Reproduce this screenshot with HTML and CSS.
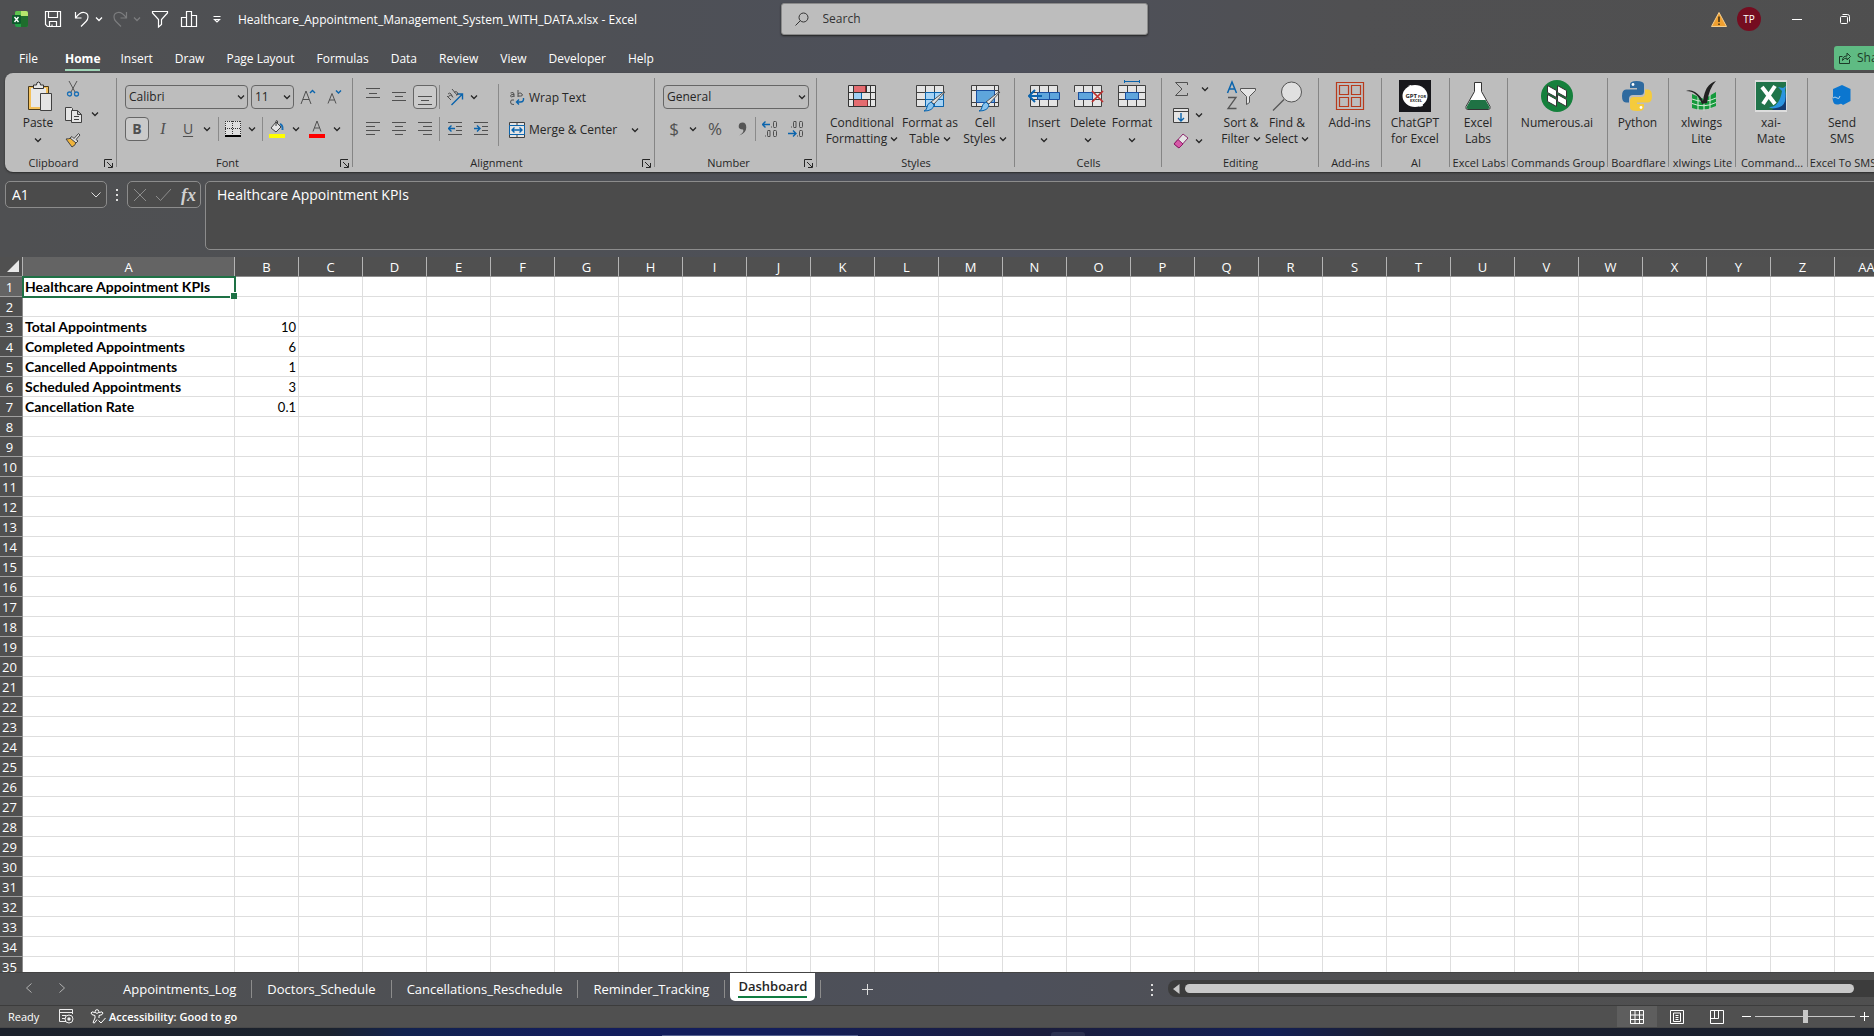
FILE: index.html
```html
<!DOCTYPE html>
<html lang="en">
<head>
<meta charset="utf-8">
<title>Healthcare_Appointment_Management_System_WITH_DATA.xlsx - Excel</title>
<link rel="stylesheet" href="styles.css">
</head>
<body>
<svg class="defs" aria-hidden="true">
  <symbol id="chev" viewBox="0 0 8 8"><path d="M1 2.5 4 5.5 7 2.5" fill="none" stroke="currentColor" stroke-width="1.3"/></symbol>
  <symbol id="launch" viewBox="0 0 9 9"><path d="M.5 8V.5H8M3 3l5 5M8.500 4v4.500H4" fill="none" stroke="#262626"/></symbol>
  <symbol id="grid" viewBox="0 0 28 22"><path d="M.5.5h27v21H.5z" fill="#e4e4e4"/><path d="M.5.5h27v21H.5zM.5 7.500h27M.5 14.500h27M9.500.5v21M18.500.5v21" fill="none" stroke="#404040"/></symbol>
</svg>
<div class="app">
  <header class="titlebar">
    <div class="quick">
      <svg class="logo" width="16" height="16" viewBox="0 0 16 16"><rect x="3" width="13" height="16" rx="2" fill="#21a045"/><path d="M9 0h5q2 0 2 2v3H9z" fill="#b5e66d"/><path d="M3 2q0-2 2-2h4v5H3z" fill="#5fc34e"/><path d="M9 5h7v9q0 2-2 2H9z" fill="#1e6d2d"/><rect y="4" width="9" height="9" rx="1" fill="#0d5c2c"/><path d="m2.500 6 4 5m0-5-4 5" stroke="#fff" stroke-width="1.400"/></svg>
      <button class="qb save" aria-label="Save"><svg width="18" height="18" viewBox="0 0 18 18"><path d="M1.500 1.500h15v15h-13l-2-2zM4.500 1.500v6h9v-6M5.500 16.500v-5h7v5M8 16.500v-2" /></svg></button>
      <button class="qb undo" aria-label="Undo"><svg width="18" height="18" viewBox="0 0 18 18"><path d="M2.500 2v6h6M2.500 8Q7 2 11 2.500q4 .5 4 4.500 0 2.500-2 4.500l-5 5"/></svg></button>
      <button class="qb small" aria-label="Undo list"><svg width="8" height="8"><use href="#chev"/></svg></button>
      <button class="qb redo" aria-label="Redo" disabled><svg width="18" height="18" viewBox="0 0 18 18"><path d="M15.500 2v6h-6M15.500 8Q11 2 7 2.500 3 3 3 7q0 2.500 2 4.500l5 5"/></svg></button>
      <button class="qb small" aria-label="Redo list" disabled><svg width="8" height="8"><use href="#chev"/></svg></button>
      <button class="qb filter" aria-label="Filter"><svg width="18" height="18" viewBox="0 0 18 18"><path d="M1.500 1.500h15v1.500l-6 6.500v5l-3 2.500V9.500L1.500 3z"/></svg></button>
      <button class="qb chart" aria-label="Chart"><svg width="18" height="18" viewBox="0 0 18 18"><path d="M1.500 7.500h5v9h-5zM6.500 1.500h5v15h-5zM11.500 5.500h5v11h-5z"/></svg></button>
      <button class="qb more" aria-label="Customize toolbar"><svg width="8" height="9" viewBox="0 0 8 9"><path d="M.5 1.500h7M1.500 4.500h5L4 7z"/></svg></button>
    </div>
    <h1 class="doc">Healthcare_Appointment_Management_System_WITH_DATA.xlsx - Excel</h1>
    <label class="search"><svg width="14" height="14" viewBox="0 0 14 14"><circle cx="8.500" cy="5.500" r="4.500" fill="none" stroke="#333"/><path d="m5.500 8.500-5 5" stroke="#333"/></svg><input type="text" placeholder="Search" aria-label="Search"></label>
    <div class="winctl">
      <svg class="warn" width="16" height="15" viewBox="0 0 16 15"><path d="M8 .5 15.500 14.500H.5z" fill="#f0a030" stroke="#f6cf8e"/><path d="M8 4.500v5.500M8 11.500v1.500" stroke="#3a2a10" stroke-width="1.500"/></svg>
      <span class="avatar">TP</span>
      <button class="wb" aria-label="Minimize"><svg width="10" height="10"><path d="M0 5.500h10"/></svg></button>
      <button class="wb" aria-label="Restore"><svg width="10" height="10" viewBox="0 0 10 10"><rect x=".5" y="2.500" width="7" height="7" rx="1"/><path d="M2.500.5h5q2 0 2 2v5"/></svg></button>
    </div>
  </header>
  <nav class="tabs">
    <a href="#file">File</a><a href="#home" class="on">Home</a><a href="#insert">Insert</a><a href="#draw">Draw</a><a href="#layout">Page Layout</a><a href="#formulas">Formulas</a><a href="#data">Data</a><a href="#review">Review</a><a href="#view">View</a><a href="#developer">Developer</a><a href="#help">Help</a>
    <button class="share"><svg width="12" height="12" viewBox="0 0 12 12"><path d="M3.500 4.500h-3v7h10v-4M3.500 8.500q0-4.500 4.500-4.500V1l3.500 3.500L8 8V6Q5 6 3.500 8.500z" fill="none" stroke="#1c3a28"/></svg>Share</button>
  </nav>

  <div class="ribbon">
    <section class="group g-clip">
      <div class="body">
        <button class="big w-paste"><svg width="32" height="32" viewBox="0 0 32 32"><path d="M6.500 6.500h20v23h-20z" fill="#f3c05a" stroke="#4a3a1a"/><path d="M9 8h15v19H9z" fill="#e8e8e8"/><path d="M11.500 8.500V5h3q0-3 2-3t2 3h3v3.500z" fill="#e8e8e8" stroke="#333"/><path d="M18.500 13.500h11v17h-11z" fill="#e4e4e4" stroke="#404040"/></svg><span>Paste</span><svg class="cv" width="8" height="8"><use href="#chev"/></svg></button>
        <div class="stack clip">
          <button class="ib" aria-label="Cut"><svg width="14" height="18" viewBox="0 0 14 18"><path d="m3 1 6 11M11 1 5 12" stroke="#555" fill="none"/><circle cx="3.500" cy="14" r="2" fill="none" stroke="#1a6fb5" stroke-width="1.300"/><circle cx="10.500" cy="14" r="2" fill="none" stroke="#1a6fb5" stroke-width="1.300"/></svg></button>
          <button class="ib" aria-label="Copy"><svg width="17" height="16" viewBox="0 0 17 16"><path d="M.5.5h6l1 1v12h-7z" fill="#e4e4e4" stroke="#404040"/><path d="M6.500 3.500h6l4 4v8h-10zM12.500 3.500v4h4M9 9.500h5M9 12.500h5" fill="#e4e4e4" stroke="#404040"/></svg></button>
          <button class="ib" aria-label="Format painter"><svg width="16" height="16" viewBox="0 0 16 16"><path d="M1 6 7 14q4-2 4-5L6 5q-2 1-5 1z" fill="#f0b43c" stroke="#444"/><path d="m5 5 6 5 2-2-2-1.500 4-4.500-1.500-1.500L9 5.500 7 3.500z" fill="#ddd" stroke="#444"/></svg></button>
        </div>
        <button class="cb copycv" aria-label="Copy options"><svg width="8" height="8"><use href="#chev"/></svg></button>
      </div>
      <h2>Clipboard</h2><button class="launch" aria-label="Clipboard settings"><svg width="9" height="9"><use href="#launch"/></svg></button>
    </section>

    <section class="group g-font">
      <div class="body rows">
        <div class="row">
          <span class="combo w-font"><select aria-label="Font"><option>Calibri</option></select><svg width="8" height="8"><use href="#chev"/></svg></span>
          <span class="combo w-size"><select aria-label="Font size"><option>11</option></select><svg width="8" height="8"><use href="#chev"/></svg></span>
          <button class="ib w28" aria-label="Increase font size"><svg width="16" height="16" viewBox="0 0 16 16"><path d="M1 15 6 2l5 13M3 10.500h6" class="ln"/><path d="m10 4 2.500-2.500L15 4" class="bl"/></svg></button>
          <button class="ib w24" aria-label="Decrease font size"><svg width="16" height="16" viewBox="0 0 16 16"><path d="m2 14.500 4-10 4 10M3.500 11h5" class="ln"/><path d="m10 1.500 2.500 2.500L15 1.500" class="bl"/></svg></button>
        </div>
        <div class="row">
          <button class="ib w24 boxed letter b">B</button><button class="ib w28 letter i">I</button><button class="ib w22 letter u">U</button><button class="cb w16" aria-label="Underline options"><svg width="8" height="8"><use href="#chev"/></svg></button>
          <i class="sep"></i>
          <button class="ib w24" aria-label="Borders"><svg width="16" height="16" viewBox="0 0 16 16"><path d="M0 0h16v15H0z" fill="#dedede"/><path d="M.5 0v14M15.500 0v14M7.500 0v14M0 .5h16M0 7.500h16" stroke="#333" stroke-dasharray="1 1"/><path d="M0 15h16" stroke="#000" stroke-width="2"/></svg></button><button class="cb w14" aria-label="Border options"><svg width="8" height="8"><use href="#chev"/></svg></button>
          <i class="sep"></i>
          <button class="ib w24" aria-label="Fill color"><svg width="18" height="18" viewBox="0 0 18 18"><path d="M8 2 3 8l5 4 5-5zM8 6V1q0-1 1.500 0v3" fill="#e4e4e4" stroke="#444"/><path d="M12 4q3 1 2.500 6" stroke="#1a6fb5" stroke-width="2" fill="none"/><path d="M1 14h16v4H1z" fill="#ff0"/></svg></button><button class="cb w14" aria-label="Fill options"><svg width="8" height="8"><use href="#chev"/></svg></button>
          <button class="ib w28" aria-label="Font color"><svg width="18" height="18" viewBox="0 0 18 18"><path d="m5 11.500 4-10.500 4 10.500M6.500 8h5" class="ln"/><path d="M1 14h16v4H1z" fill="#f00"/></svg></button><button class="cb" aria-label="Font color options"><svg width="8" height="8"><use href="#chev"/></svg></button>
        </div>
      </div>
      <h2>Font</h2><button class="launch" aria-label="Font settings"><svg width="9" height="9"><use href="#launch"/></svg></button>
    </section>

    <section class="group g-align">
      <div class="body">
        <div class="rows">
          <div class="row">
            <button class="ib w24" aria-label="Top align"><svg width="14" height="20" viewBox="0 0 14 20"><path d="M0 1.500h14M3 6.500h8M0 10.500h14" class="ln"/></svg></button><button class="ib w28" aria-label="Middle align"><svg width="14" height="20" viewBox="0 0 14 20"><path d="M0 5.500h14M3 9.500h8M0 13.500h14" class="ln"/></svg></button><button class="ib w24 boxed" aria-label="Bottom align"><svg width="14" height="20" viewBox="0 0 14 20"><path d="M0 9.500h14M3 13.500h8M0 17.500h14" class="ln"/></svg></button>
            <i class="sep tight"></i>
            <button class="ib w26" aria-label="Orientation"><svg width="18" height="18" viewBox="0 0 18 18"><path d="M5.500 17 16 6.500M11 6h5.500v5.500" class="bl"/><path d="m1 8 4 4M2 6q2-2 3 0l2 3.500M2.500 9.500Q3 6 6 8M6 1l5 6M8 4.500q2-2 3.500 0t-1 3" class="ln"/></svg></button><button class="cb" aria-label="Orientation options"><svg width="8" height="8"><use href="#chev"/></svg></button>
          </div>
          <div class="row">
            <button class="ib w24" aria-label="Align left"><svg width="14" height="14" viewBox="0 0 14 14"><path d="M0 .5h14M0 4.500h9M0 8.500h14M0 12.500h9" class="ln"/></svg></button><button class="ib w28" aria-label="Center"><svg width="14" height="14" viewBox="0 0 14 14"><path d="M0 .5h14M3 4.500h8M0 8.500h14M3 12.500h8" class="ln"/></svg></button><button class="ib w24" aria-label="Align right"><svg width="14" height="14" viewBox="0 0 14 14"><path d="M0 .5h14M5 4.500h9M0 8.500h14M5 12.500h9" class="ln"/></svg></button>
            <i class="sep tight"></i>
            <button class="ib w26" aria-label="Decrease indent"><svg width="14" height="14" viewBox="0 0 14 14"><path d="M0 .5h14M8 4.500h6M8 8.500h6M0 12.500h14" class="ln"/><path d="M.5 6.500H7M3.500 3.500l-3 3 3 3" class="bl"/></svg></button><button class="ib w26" aria-label="Increase indent"><svg width="14" height="14" viewBox="0 0 14 14"><path d="M0 .5h14M8 4.500h6M8 8.500h6M0 12.500h14" class="ln"/><path d="M0 6.500h6M3 3.500l3 3-3 3" class="bl"/></svg></button>
          </div>
        </div>
        <div class="rows wrapcol">
          <button class="tb"><svg width="16" height="16" viewBox="0 0 16 16"><path d="M1.500 3Q5 1.500 5 4v3M5 4.500Q1.500 4 1.500 6T5 6M9 0v7M9 4q2-2.500 4 0t-4 2M5 10q-3.500-1-3.500 2T5 14.500" class="ln"/><path d="M14.500 8q.5 4-3 4H7.500M10 9.500 7.500 12l2.500 2.500" class="bl"/></svg>Wrap Text</button>
          <button class="tb"><svg width="16" height="16" viewBox="0 0 16 16"><path d="M.5.500h15v15H.5zM8 0v4M8 12v4" fill="#e4e4e4" stroke="#404040"/><path d="M.5 3.500h15v9H.5z" fill="#e4e4e4" stroke="#0a64ad"/><path d="M3 8h10M5.500 5.500 3 8l2.500 2.500M10.500 5.500 13 8l-2.500 2.500" class="bl"/></svg>Merge &amp; Center<svg class="mcv" width="8" height="8"><use href="#chev"/></svg></button>
        </div>
      </div>
      <h2>Alignment</h2><button class="launch" aria-label="Alignment settings"><svg width="9" height="9"><use href="#launch"/></svg></button>
    </section>

    <section class="group g-num">
      <div class="body rows">
        <div class="row"><span class="combo w-gen"><select aria-label="Number format"><option>General</option></select><svg width="8" height="8"><use href="#chev"/></svg></span></div>
        <div class="row">
          <button class="ib w22 sym">$</button><button class="cb w16" aria-label="Currency options"><svg width="8" height="8"><use href="#chev"/></svg></button><button class="ib w28 sym">%</button><button class="ib w26" aria-label="Comma style"><svg width="9" height="14" viewBox="0 0 8 13"><path d="M1 12.500Q6 9.500 4.500 7 0 7 .5 3.500 1 .5 4 .5 7.500.5 7.500 5q0 5-6.500 7.500z" fill="#555"/></svg></button>
          <i class="sep flush"></i>
          <button class="ib w28" aria-label="Increase decimal"><svg width="16" height="16" viewBox="0 0 16 16"><path d="M.5 3.500H8M3.500.5l-3 3 3 3" class="bl"/><path d="M12 .5h1.500q1 0 1 1v4q0 1-1 1H12q-.5 0-.5-1v-4q0-1 .5-1zM6 9.500h2v6H6q-.5 0-.5-1v-4q0-1 .5-1zM12 9.500h1.500q1 0 1 1v4q0 1-1 1H12q-.5 0-.5-1v-4q0-1 .5-1zM3 15h1M9 6h1" class="ln"/></svg></button><button class="ib w24" aria-label="Decrease decimal"><svg width="16" height="16" viewBox="0 0 16 16"><path d="M0 12.500h8M5 9.500l3 3-3 3" class="bl"/><path d="M12 9.500h1.500q1 0 1 1v4q0 1-1 1H12q-.5 0-.5-1v-4q0-1 .5-1zM6 .5h2v6H6q-.5 0-.5-1v-4q0-1 .5-1zM12 .5h1.500q1 0 1 1v4q0 1-1 1H12q-.5 0-.5-1v-4q0-1 .5-1zM3 6h1M9 15h1" class="ln"/></svg></button>
        </div>
      </div>
      <h2>Number</h2><button class="launch" aria-label="Number settings"><svg width="9" height="9"><use href="#launch"/></svg></button>
    </section>

    <section class="group g-styles">
      <div class="body">
        <button class="big w76"><svg width="32" height="32" viewBox="0 0 32 32"><path d="M2.500 5.500h27v21h-27z" fill="#e4e4e4"/><path d="M7.500 5.500h12v7h-12zM7.500 19.500h14v7h-14z" fill="#e46c70" stroke="#8c2a2e"/><path d="M7.500 12.500h8v7h-8z" fill="#9fd0f5" stroke="#0a64ad"/><path d="M2.500 5.500h27v21h-27zM2.500 12.500h27M2.500 19.500h27M7.500 5.500v21M20.500 5.500v7M24.500 5.500v21" fill="none" stroke="#333"/></svg><span>Conditional<br>Formatting <svg width="8" height="8"><use href="#chev"/></svg></span></button>
        <button class="big w60"><svg width="32" height="32" viewBox="0 0 32 32"><use href="#grid" x="2" y="5" width="28" height="22"/><path d="M11.500 12.500h18v14h-18z" fill="#a6d3f5" stroke="#0a64ad"/><path d="M11.500 19.500h18M20.500 12.500v14" stroke="#0a64ad"/><path d="M31 12 20 24l-3-2L29 12.500z" fill="#e4e4e4" stroke="#555"/><path d="m17 22 3 3q-1 6-10 6 3-1 3-4t4-5z" fill="#8ac4ee" stroke="#0a64ad"/></svg><span>Format as<br>Table <svg width="8" height="8"><use href="#chev"/></svg></span></button>
        <button class="big w50"><svg width="32" height="32" viewBox="0 0 32 32"><path d="M2.500 5.500h27v21h-27zM2.500 10.500h27M2.500 22.500h27M7.500 5.500v21M25.500 5.500v21" fill="#e4e4e4" stroke="#404040"/><path d="M7.500 10.500h18v12h-18z" fill="#5ea5dc" stroke="#1a4fa0"/><path d="M31 12 20 24l-3-2L29 12.500z" fill="#e4e4e4" stroke="#555"/><path d="m17 22 3 3q-1 6-10 6 3-1 3-4t4-5z" fill="#8ac4ee" stroke="#0a64ad"/></svg><span>Cell<br>Styles <svg width="8" height="8"><use href="#chev"/></svg></span></button>
      </div>
      <h2>Styles</h2>
    </section>

    <section class="group g-cells">
      <div class="body">
        <button class="big w44"><svg width="32" height="32" viewBox="0 0 32 32"><use href="#grid" x="2" y="5" width="28" height="22"/><path d="M9.500 12.500h22v7h-22z" fill="#5ea5dc" stroke="#1a4fa0"/><path d="M21.500 12.500v7" stroke="#1a4fa0"/><path d="M1 16h13M7 10l-6 6 6 6" fill="none" stroke="#0a64ad" stroke-width="2"/></svg><span>Insert</span><svg class="cv" width="8" height="8"><use href="#chev"/></svg></button>
        <button class="big w44"><svg width="32" height="32" viewBox="0 0 32 32"><use href="#grid" x="2" y="5" width="28" height="22"/><path d="M1 12h5v8H1z" fill="#bdbdbd"/><path d="M6.500 12.500h14v7h-14z" fill="#5ea5dc" stroke="#1a4fa0"/><path d="m20 11 11 11M31 11 20 22" stroke="#c03030" stroke-width="1.700"/></svg><span>Delete</span><svg class="cv" width="8" height="8"><use href="#chev"/></svg></button>
        <button class="big w44"><svg width="32" height="32" viewBox="0 0 32 32"><use href="#grid" x="2" y="5" width="28" height="22"/><path d="M9.500 12.500h13v7h-13z" fill="#5ea5dc" stroke="#1a4fa0"/><path d="M8.500 0v3M23.500 0v3M8.500 1.500h15" stroke="#0a64ad"/></svg><span>Format</span><svg class="cv" width="8" height="8"><use href="#chev"/></svg></button>
      </div>
      <h2>Cells</h2>
    </section>

    <section class="group g-edit">
      <div class="body">
        <div class="stack edit">
          <div><button class="ib w24" aria-label="AutoSum"><svg width="13" height="15" viewBox="0 0 13 15"><path d="M12.500 3V.5H.5L7 7 .5 13.500h12V11" class="ln"/></svg></button><button class="cb w24" aria-label="Sum options"><svg width="8" height="8"><use href="#chev"/></svg></button></div>
          <div><button class="ib w24" aria-label="Fill"><svg width="16" height="15" viewBox="0 0 16 15"><path d="M.5.500h15v14H.5zM.5 3.500h15" fill="#e4e4e4" stroke="#404040"/><path d="M8 5v8M5 10l3 3 3-3" class="bl"/></svg></button><button class="cb" aria-label="Fill options"><svg width="8" height="8"><use href="#chev"/></svg></button></div>
          <div><button class="ib w24" aria-label="Clear"><svg width="16" height="16" viewBox="0 0 16 16"><path d="M10 1 15 5 6 15 1 11z" fill="#e4e4e4" stroke="#8c2a6e"/><path d="M5 6.500 10 11 6 15 1 11z" fill="#d65aa8" stroke="#8c1a66"/></svg></button><button class="cb" aria-label="Clear options"><svg width="8" height="8"><use href="#chev"/></svg></button></div>
        </div>
        <button class="big w46"><svg width="32" height="32" viewBox="0 0 32 32"><path d="m2.500 13 4.500-11 4.500 11M4 9h6" fill="none" stroke="#0a64ad" stroke-width="1.500"/><path d="M3 17.500h8l-8 11h8.500" fill="none" stroke="#555" stroke-width="1.300"/><path d="M15.500 8.500h15v2l-6 6v6l-3 2v-8l-6-6z" fill="#e4e4e4" stroke="#555"/></svg><span>Sort &amp;<br>Filter <svg width="8" height="8"><use href="#chev"/></svg></span></button>
        <button class="big w46"><svg width="32" height="32" viewBox="0 0 32 32"><circle cx="20.500" cy="12" r="10" fill="#e0e0e0" stroke="#555"/><path d="M13 19.500 2 30.500" stroke="#555" stroke-width="1.300"/></svg><span>Find &amp;<br>Select <svg width="8" height="8"><use href="#chev"/></svg></span></button>
      </div>
      <h2>Editing</h2>
    </section>

    <section class="group g-addins"><div class="body mid"><button class="big"><svg width="32" height="32" viewBox="0 0 32 32"><path d="M2.500 2.500h27v27h-27zM5.500 5.500h9v9h-9zM17.500 5.500h9v9h-9zM5.500 17.500h9v9h-9zM17.500 17.500h9v9h-9z" fill="none" stroke="#b83a1c" stroke-width="1.200"/></svg><span>Add-ins</span></button></div><h2>Add-ins</h2></section>
    <section class="group g-ai"><div class="body mid"><button class="big"><svg width="32" height="32" viewBox="0 0 32 32"><path d="M0 0h32v32H0z" fill="#17171b"/><ellipse cx="16" cy="16" rx="12.500" ry="11" fill="#fff"/><path d="m9 6 3-1 1 2zM20 27l4-1-1-3z" fill="#fff"/><text x="6.500" y="17.500" class="gpt">GPT</text><text x="19" y="17.500" class="gpt tiny">FOR</text><text x="11" y="21.500" class="gpt tiny">EXCEL</text></svg><span>ChatGPT<br>for Excel</span></button></div><h2>AI</h2></section>
    <section class="group g-labs"><div class="body mid"><button class="big"><svg width="32" height="32" viewBox="0 0 32 32"><path d="M12.500 2.500h7v9l8.500 15q1 3-2 3H6q-3 0-2-3l8.500-15z" fill="#fff" stroke="#333"/><path d="M8.500 20h15l4 7q.5 2-1.500 2H6q-2 0-1.500-2z" fill="#1f7244"/></svg><span>Excel<br>Labs</span></button></div><h2>Excel Labs</h2></section>
    <section class="group g-comm"><div class="body mid"><button class="big"><svg width="32" height="32" viewBox="0 0 32 32"><circle cx="16" cy="16" r="16" fill="#15803c"/><path d="m6.500 5.500 9 5v7l-9-5zM16.500 5.500l9 5v7l-9-5zM6.500 14.500l9 5v7l-9-5zM16.500 14.500l9 5v7l-9-5z" fill="#fff" stroke="#333"/></svg><span>Numerous.ai</span></button></div><h2>Commands Group</h2></section>
    <section class="group g-board"><div class="body mid"><button class="big"><svg width="32" height="32" viewBox="0 0 32 32"><path d="M15.500 1Q9 1 9 4.500V8h7v1.500H5Q1 9.500 1 16t4 6.500h3V19q0-4 4-4h7.500Q23 15 23 11.500v-7Q23 1 15.500 1z" fill="#2f6a9f"/><circle cx="12" cy="4.500" r="1.400" fill="#fff"/><path d="M16.500 31q6.500 0 6.500-3.500V24h-7v-1.500h11q4 0 4-6.500t-4-6.500h-3V13q0 4-4 4h-7.500Q9 17 9 20.500v7Q9 31 16.500 31z" fill="#f5cb3c"/><circle cx="20" cy="27.500" r="1.400" fill="#fff"/></svg><span>Python</span></button></div><h2>Boardflare</h2></section>
    <section class="group g-xlw"><div class="body mid"><button class="big"><svg width="32" height="32" viewBox="0 0 32 32"><path d="m7 14 12 5 12-7v14q-12 6-24 2z" fill="#159a3c"/><path d="M7 19q12 5 24-1M7 23.500q12 5 24-1M13 16v14M19 18v12.500M25 15v14" stroke="#d5e8d8" fill="none"/><path d="M1 11q4-2 9 1 5 3 8 9Q20 4 31 1q-7 7-9 22l-5 1q-5-13-16-13z" fill="#222"/></svg><span>xlwings<br>Lite</span></button></div><h2>xlwings Lite</h2></section>
    <section class="group g-cmd"><div class="body mid"><button class="big"><svg width="32" height="32" viewBox="0 0 32 32"><path d="M0 0h32v32H0z" fill="#ddd"/><path d="M1 2h30v28H1z" fill="#20744a"/><path d="M17 30 31 14v16z" fill="#143a70"/><path d="m7 7 13 17M20 6 8 24" stroke="#fff" stroke-width="4"/><path d="M14 27q10 1 13-16l-4-4 5 1 3-2-1 4q3 17-9 18-5 1-7-1z" fill="#2a94e0"/></svg><span>xai-<br>Mate</span></button></div><h2>Command...</h2></section>
    <section class="group g-sms"><div class="body mid"><button class="big"><svg width="32" height="32" viewBox="0 0 32 32"><path d="m16 5 8.500 4v12L17 25q-2-2-3-1-6 2-7-3-1-3 0-4V9z" fill="#0b76cf"/><path d="M7 18q2-2 4 0t3-2" stroke="#b8d4ea" fill="none"/></svg><span>Send<br>SMS</span></button></div><h2>Excel To SMS</h2></section>
  </div>

  <div class="formula">
    <div class="namebox"><input type="text" value="A1" aria-label="Name box"><svg width="10" height="8" viewBox="0 0 10 8"><path d="m.5 1.500 4.500 4.500 4.500-4.500"/></svg></div>
    <svg class="dots" width="2" height="12"><path d="M0 0h2v2H0zM0 5h2v2H0zM0 10h2v2H0z" fill="#ddd"/></svg>
    <div class="fxbox">
      <button aria-label="Cancel" class="dim"><svg width="12" height="12"><path d="m0 0 12 12M12 0 0 12"/></svg></button>
      <button aria-label="Enter" class="dim"><svg width="15" height="12"><path d="m0 7 4.500 4.500L15 0"/></svg></button>
      <button class="fx">fx</button>
    </div>
    <textarea class="fbar" aria-label="Formula">Healthcare Appointment KPIs</textarea>
  </div>

  <main class="sheet"><table id="cells"></table></main>

  <footer class="sheetbar">
    <button class="nav" aria-label="Previous sheet"><svg width="6" height="10"><path d="M5.500.5.500 5l5 4.500"/></svg></button>
    <button class="nav" aria-label="Next sheet"><svg width="6" height="10"><path d="m.5.5 5 4.500-5 4.500"/></svg></button>
    <div class="sheets"><button>Appointments_Log</button><button>Doctors_Schedule</button><button>Cancellations_Reschedule</button><button>Reminder_Tracking</button><button class="current"><span>Dashboard</span></button><i class="tabsep"></i></div>
    <button class="add" aria-label="New sheet"><svg width="11" height="11"><path d="M5.500 0v11M0 5.500h11"/></svg></button>
    <svg class="dots sdots" width="2" height="12"><path d="M0 0h2v2H0zM0 5h2v2H0zM0 10h2v2H0z" fill="#ddd"/></svg>
    <div class="scroll"><svg width="7" height="10"><path d="M6.500 0v10L0 5z" fill="#c8c8c8"/></svg><span class="thumb"></span></div>
  </footer>
  <div class="status">
    <span class="ready">Ready</span>
    <svg width="15" height="15" viewBox="0 0 15 15"><path d="M7 12.500H.5V.5h13V5M.5 3.500h13M3 6.500h4M3 9.500h3" fill="none" stroke="#eee"/><circle cx="10" cy="10" r="4" fill="none" stroke="#eee"/><circle cx="10" cy="10" r="1.700" fill="#eee"/></svg>
    <button class="acc"><svg width="16" height="15" viewBox="0 0 16 15"><circle cx="7" cy="2.500" r="1.800"/><path d="M5 3.500Q1 2 1 4t4 2.500V9l-2 4.500q1 1 2 0L7 10.500M9 3.500Q13 2 13 4T9 6.500V9M8.500 11.500l2.500 2.500L15.500 9"/></svg>Accessibility: Good to go</button>
    <div class="views">
      <button class="vb on" aria-label="Normal view"><svg width="14" height="14"><path d="M.5.5h13v13H.5zM.5 5h13M.5 9.500h13M5 .5v13M9.500.5v13"/></svg></button>
      <button class="vb" aria-label="Page layout view"><svg width="14" height="14"><path d="M.5.5h13v13H.5zM3.500 3h7v8.500h-7zM5.500 5.500h3M5.500 7.500h3M5.500 9.500h3"/></svg></button>
      <button class="vb" aria-label="Page break view"><svg width="14" height="14"><path d="M.5.5h13v13H.5zM.5 8.500h8V.5M4.500.5v8"/></svg></button>
      <button class="zb" aria-label="Zoom out"><svg width="9" height="9"><path d="M0 4.500h9"/></svg></button>
      <input type="range" min="10" max="190" value="100" aria-label="Zoom">
      <button class="zb" aria-label="Zoom in"><svg width="9" height="9"><path d="M0 4.500h9M4.500 0v9"/></svg></button>
    </div>
  </div>
  <div class="taskbar"><span class="tsearch"></span><span class="tapp"></span></div>
</div>
<script src="sheet.js"></script>
</body>
</html>
```
FILE: styles.css
```css
* { box-sizing: border-box; }
html, body { height: 100%; margin: 0; overflow: hidden; }
body { font: 12px/16px "Open Sans", "Noto Sans", sans-serif; color: #262626; background: #4f5052; }
button, input, select, textarea { font: inherit; color: inherit; margin: 0; padding: 0; border: 0; background: none; border-radius: 0; outline: 0; }
button { display: flex; align-items: center; justify-content: center; }
svg { display: block; flex: none; }
h1, h2 { margin: 0; font: inherit; }
.defs { position: absolute; width: 0; height: 0; }
.ln { fill: none; stroke: #505050; }
.bl { fill: none; stroke: #0a64ad; stroke-width: 1.4; }

/* The window is a little wider than the screen area and is cut at the right. */
.app { display: flex; flex-direction: column; width: calc(100% + 54px); height: 100%; background: linear-gradient(90deg, #4f5052 0, #4e5055 30%, #4d505b 52%, #505052 70%, #4f4f4f 100%); }

.titlebar { display: grid; grid-template-columns: 1fr 367px 1fr; align-items: center; height: 38px; color: #fff; grid-template-areas: "left search right"; }
.quick { display: flex; align-items: center; grid-area: left; padding-left: 12px; }
.doc { grid-area: left; padding: 2px 0 0 238px; white-space: nowrap; }
.qb svg { fill: none; stroke: #fff; stroke-width: 1.2; }
.logo { margin-right: 16px; }
.qb.undo { margin-left: 11px; }
.qb.small { width: 16px; }
.qb.redo { margin-left: 4px; }
.qb.filter { margin-left: 6px; }
.qb.chart { margin-left: 11px; }
.qb.more { margin-left: 15px; }
.qb:disabled { opacity: .25; }
.search { grid-area: search; display: flex; align-items: center; gap: 14px; height: 32px; padding-left: 13px; background: #bdbdbd; border: 1px solid #8a8a8a; border-radius: 3px; box-shadow: 0 1px 2px #222; }
.search input { width: 200px; }
.search input::placeholder { color: #333; opacity: 1; }
.winctl { grid-area: right; display: flex; align-items: center; justify-content: flex-end; padding-right: 59px; }
.avatar { display: grid; place-items: center; width: 24px; height: 24px; margin: 0 12px 0 10px; border-radius: 50%; background: #750d20; font-size: 10px; }
.wb { width: 48px; height: 24px; }
.wb svg { fill: none; stroke: #fff; }

.tabs { display: flex; height: 35px; padding: 8px 0 0 19px; gap: 22px; color: #fff; }
.tabs a { color: inherit; text-decoration: none; height: 25px; line-height: 25px; white-space: nowrap; }
.tabs a.on { margin: 0 -2px 0 5px; font-weight: 700; border-bottom: 2px solid #9fd5b7; }
.share { gap: 6px; justify-content: flex-start; width: 80px; height: 24px; margin-left: auto; margin-right: 14px; padding-left: 5px; border-radius: 3px; background: #5fbb83; color: #1c3a28; }

.ribbon { display: flex; height: 99px; flex: none; margin-left: 5px; background: #bdbdbd; border-radius: 8px 0 0 8px; box-shadow: 0 1px 2px #2a2a2a; overflow: hidden; }
.group { display: grid; grid-template-rows: 82px 16px; grid-template-columns: 1fr; flex: none; background: linear-gradient(#858585, #858585) right 5px / 1px 89px no-repeat; }
.group h2 { grid-area: 2 / 1; text-align: center; font-size: 11px; white-space: nowrap; overflow: hidden; }
.launch { grid-area: 2 / 1; justify-self: end; margin-right: 4px; }
.g-clip { width: 112px; }
.g-font { width: 236px; }
.g-align { width: 302px; }
.g-num { width: 162px; }
.g-clip h2, .g-font h2, .g-align h2, .g-num h2 { padding-right: 15px; }
.g-styles { width: 198px; }
.g-cells { width: 147px; }
.g-edit { width: 157px; }
.g-addins { width: 63px; }
.g-ai { width: 68px; }
.g-labs { width: 58px; }
.g-comm { width: 100px; }
.g-board { width: 61px; }
.g-xlw { width: 67px; }
.g-cmd { width: 72px; }
.g-sms { width: 70px; }
.body { display: flex; padding: 7px 0 0 7px; }
.body.mid { justify-content: center; padding: 7px 2px 0 0; }
.big { flex-direction: column; justify-content: flex-start; gap: 3px; white-space: nowrap; }
.big span { text-align: center; }
.big span svg { display: inline-block; vertical-align: 0; }
.big .cv { margin-top: 2px; }
.gpt { font: 700 6px "Open Sans", sans-serif; fill: #222; }
.gpt.tiny { font-size: 4px; }
.w-paste { width: 52px; }
.stack { display: flex; flex-direction: column; align-items: flex-start; margin-top: -4px; }
.clip { width: 18px; }
.clip .ib, .edit .ib, .edit .cb { height: 26px; }
.clip .ib { width: 18px; }
.edit { width: 49px; }
.edit > div { display: flex; }
.copycv { height: 26px; width: 14px; margin: 22px 0 0 7px; }
.ib, .cb { flex: none; }
.cb { width: 12px; height: 24px; }
.row .ib { height: 24px; }
.rows { display: flex; flex-direction: column; gap: 8px; }
.body.rows { padding: 12px 0 0 8px; }
.g-align .body { padding: 0 0 0 8px; }
.g-align .rows { padding-top: 12px; }
.row { display: flex; height: 24px; }
.w14 { width: 14px; } .w16 { width: 16px; } .w22 { width: 22px; } .w24 { width: 24px; } .w26 { width: 26px; } .w28 { width: 28px; }
.w44 { width: 44px; } .w46 { width: 46px; } .w50 { width: 50px; } .w60 { width: 60px; } .w76 { width: 76px; }
.sep { width: 1px; margin: 0 2px 0 3px; background: #8a8a8a; }
.sep.tight { margin: 0 2px; }
.sep.flush { margin: 0; }
.boxed { border: 1px solid #666; border-radius: 4px; background: #cacaca; }
.letter { font-size: 14px; color: #505050; }
.letter.b { font-weight: 700; }
.letter.i { font-family: "Liberation Serif", serif; font-style: italic; font-size: 16px; }
.letter.u { text-decoration: underline; text-underline-offset: 2px; }
.sym { font-size: 17px; color: #505050; }
.combo { display: grid; align-items: center; border: 1px solid #666; border-radius: 4px; }
.combo select { grid-area: 1 / 1; appearance: none; width: 100%; height: 22px; padding-left: 3px; line-height: 20px; }
.combo svg { grid-area: 1 / 1; justify-self: end; margin-right: 2px; pointer-events: none; }
.w-font { width: 123px; margin-right: 3px; } .w-size { width: 43px; } .w-gen { width: 146px; }
.wrapcol { margin: 11px 0 0 4px; padding: 0 0 0 10px; height: 62px; border-left: 1px solid #8a8a8a; }
.g-align .wrapcol { padding-top: 2px; }
.tb { gap: 4px; height: 24px; justify-content: flex-start; white-space: nowrap; }
.mcv { margin-left: 10px; }

.formula { display: flex; align-items: flex-start; flex: none; height: 85px; padding: 9px 0 0 5px; color: #fff; font-size: 14px; }
.namebox, .fxbox { display: flex; align-items: center; height: 27px; border: 1px solid #8c8c8c; border-radius: 5px; }
.namebox { width: 102px; padding: 0 5px 0 6px; background: #4b4b4b; }
.namebox input { flex: 1; min-width: 0; }
.namebox svg, .fxbox svg { fill: none; stroke: #ddd; }
.dots { margin: 8px 9px 0; }
.fxbox { width: 74px; padding: 0 4px 0 6px; justify-content: space-between; background: #4b4b4b; }
.fxbox .dim { opacity: .45; }
.fx { font: italic 700 18px/20px "Liberation Serif", serif; color: #d0d0d0; }
.fbar { flex: 1; height: 69px; margin-left: 4px; padding: 3px 11px; border: 1px solid #8c8c8c; border-radius: 5px 0 0 5px; background: #4b4b4b; line-height: 20px; resize: none; }

.sheet { flex: 1; min-height: 0; overflow: hidden; background: #fff; font: 14px/18px Lato, "Open Sans", sans-serif; color: #000; }
.sheet table { table-layout: fixed; border-collapse: separate; border-spacing: 0; width: 1899px; }
.sheet td, .sheet th { height: 20px; padding: 0; border: 0 solid #dedede; border-width: 0 1px 1px 0; white-space: nowrap; }
.sheet th { background: #505050; color: #fff; font: 13px/18px "Open Sans", sans-serif; border-color: #a0a0a0; }
.sheet thead th { border-color: #b4b4b4; border-bottom-color: #8c8c8c; }
.sheet tbody th { padding: 0 3px 0 0; border-right-color: #8c8c8c; }
.sheet .hot { background: #646464; }
.sheet .label { padding-left: 2px; font-weight: 700; }
.sheet .num { padding-right: 2px; text-align: right; font-size: 13px; }
.sheet .active { position: relative; outline: 2px solid #1e7145; outline-offset: -1px; }
.sheet .active::after { content: ""; position: absolute; right: -3px; bottom: -3px; width: 6px; height: 6px; border: solid #fff; border-width: 1px 0 0 1px; background: #1e7145; }
.c-head { width: 23px; } .c-a { width: 212px; }
.corner svg { margin: 0 0 0 auto; }

.sheetbar { display: flex; flex: none; height: 33px; padding-left: 26px; border-top: 1px solid #444; color: #fff; font-size: 13px; }
.sheetbar svg { fill: none; stroke: #ddd; }
.nav { width: 6px; margin-right: 27px; opacity: .7; height: 30px; }
.sheets { display: flex; margin-left: 16px; }
.sheets button { height: 32px; padding: 0 16px 0 15px; background: linear-gradient(#8c8c8c, #8c8c8c) right 7px / 1px 18px no-repeat; }
.sheets .current { height: 28px; margin: 0 5px; padding: 0 8px; background: #fff; border-radius: 0 0 5px 5px; color: #262626; font-weight: 600; }
.sheets .current span { border-bottom: 2px solid #107c41; line-height: 20px; }
.tabsep { width: 1px; height: 18px; margin-top: 7px; background: #8c8c8c; }
.add { height: 32px; margin-left: 35px; width: 22px; }
.sheetbar .sdots { margin: 11px 15px 0 auto; stroke: none; }
.scroll { display: flex; align-items: center; width: 752px; height: 17px; margin: 7px 8px 0 0; padding-left: 5px; background: #3c3c3c; border-radius: 8px; gap: 5px; }
.scroll svg { stroke: none; }
.thumb { width: 669px; height: 9px; border-radius: 5px; background: #c8c8c8; }

.status { display: flex; align-items: center; flex: none; height: 22px; padding-left: 8px; background: #505050; border-top: 1px solid #3c3c3c; color: #fff; font-size: 11px; }
.ready { width: 51px; }
.acc { margin-left: 16px; gap: 3px; font-weight: 600; }
.acc svg, .vb svg, .zb svg { fill: none; stroke: #fff; }
.views { display: flex; align-items: center; margin-left: auto; padding-right: 55px; height: 21px; }
.vb { width: 40px; height: 21px; }
.vb.on { background: #5e5e5e; }
.zb { width: 18px; height: 21px; }
.views input { appearance: none; width: 100px; height: 15px; background: linear-gradient(#c8c8c8, #c8c8c8) center / 100% 1px no-repeat; }
.views input::-webkit-slider-thumb { appearance: none; width: 5px; height: 13px; background: #c8c8c8; }
.taskbar { display: flex; flex: none; align-items: flex-end; height: 9px; padding-left: 662px; border-top: 1px solid #484848; background: linear-gradient(90deg, #1c212b 0, #1b222d 17%, #12224f 21%, #131d5c 30%, #131e5c 40%, #1b1d3c 54%, #131f55 66%, #1b1f30 72%, #1a202b 100%); }
.tsearch { width: 196px; height: 1px; background: #54608e; }
.tapp { width: 34px; height: 4px; margin-left: 193px; background: #2c3150; border-radius: 3px 3px 0 0; }
```
FILE: sheet.js
```js
const labels = {
  1: ["Healthcare Appointment KPIs"],
  3: ["Total Appointments", 10],
  4: ["Completed Appointments", 6],
  5: ["Cancelled Appointments", 1],
  6: ["Scheduled Appointments", 3],
  7: ["Cancellation Rate", 0.1]
};
const columns = [..."ABCDEFGHIJKLMNOPQRSTUVWXYZ", "AA"];
const cols = '<col class="c-head"><col class="c-a">' + "<col>".repeat(26);
const corner = '<th class="corner"><svg width="15" height="13"><path d="M12 0v12H0z" fill="#e8e8e8"/></svg></th>';
const head = columns.map(c => `<th scope="col"${c === "A" ? ' class="hot"' : ""}>${c}</th>`).join("");
let rows = "";
for (let r = 1; r <= 35; r++) {
  const [label = "", value = ""] = labels[r] || [];
  rows += `<tr><th scope="row"${r === 1 ? ' class="hot"' : ""}>${r}</th>` +
    `<td class="label${r === 1 ? " active" : ""}">${label}</td><td class="num">${value}</td>` +
    "<td></td>".repeat(25) + "</tr>";
}
document.getElementById("cells").innerHTML =
  `<colgroup>${cols}</colgroup><thead><tr>${corner}${head}</tr></thead><tbody>${rows}</tbody>`;
```
